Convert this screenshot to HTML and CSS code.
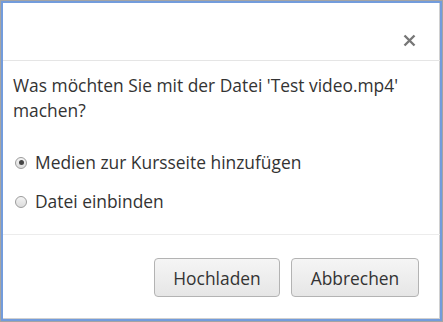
FILE: index.html
```html
<!DOCTYPE html>
<html lang="de">
<head>
<meta charset="utf-8">
<link rel="stylesheet" href="styles.css">
</head>
<body>
<div class="frame">
  <div class="dialog">
    <div class="header">
      <button class="close" aria-label="Schließen">
        <svg width="13" height="13" viewBox="0 0 13 13"><path d="M1.5 1.5 L11.5 11.5 M11.5 1.5 L1.5 11.5" stroke="#777" stroke-width="2.4" stroke-linecap="butt"/></svg>
      </button>
    </div>
    <div class="body">
      <p class="question">Was möchten Sie mit der Datei 'Test video.mp4' machen?</p>
      <label class="option"><span class="radio checked"></span>Medien zur Kursseite hinzufügen</label>
      <label class="option"><span class="radio"></span>Datei einbinden</label>
    </div>
    <div class="footer">
      <button class="btn btn-upload">Hochladen</button>
      <button class="btn btn-cancel">Abbrechen</button>
    </div>
  </div>
</div>
</body>
</html>
```
FILE: styles.css
```css
html, body { margin: 0; padding: 0; }
body { width: 443px; height: 322px; font-family: "Open Sans", "Noto Sans", sans-serif; color: #333; }
.frame { box-sizing: border-box; width: 443px; height: 322px; border: 1px solid #a4a4a4; }
.dialog { box-sizing: border-box; height: 100%; border: 2px solid #739cdc; background: #fff; display: flex; flex-direction: column; box-shadow: inset -1px -1px 0 #d0d0d0; }
.header { height: 58px; border-bottom: 1px solid #e5e5e5; display: flex; justify-content: flex-end; align-items: flex-end; padding: 0 24px 13px 0; box-sizing: border-box; }
.close { border: 0; background: none; padding: 0; width: 13px; height: 13px; display: flex; }
.body { padding: 12px 10px 0 10px; height: 174px; box-sizing: border-box; border-bottom: 1px solid #ececec; }
.question { margin: 0 0 27px 0; font-size: 17.4px; line-height: 25px; }
.option { display: flex; align-items: center; font-size: 17.4px; line-height: 25px; margin-bottom: 14px; }
.radio { width: 12px; height: 12px; border-radius: 50%; border: 1px solid #9c9c9c; background: linear-gradient(#f4f4f4, #dcdcdc); margin: 0 8px 0 2px; box-sizing: border-box; position: relative; }
.radio.checked::after { content: ""; position: absolute; left: 2.5px; top: 2.5px; width: 5px; height: 5px; border-radius: 50%; background: #444; }
.footer { flex: 1; display: flex; justify-content: flex-end; align-items: flex-start; gap: 11px; padding: 23px 21px 0 0; }
.btn { font-family: inherit; font-size: 17.4px; color: #333; height: 39px; padding: 0; border: 1px solid #b3b3b3; border-radius: 4px; background: linear-gradient(#f5f5f5, #e6e6e6); }
.btn-upload { width: 126px; }
.btn-cancel { width: 128px; }
```
